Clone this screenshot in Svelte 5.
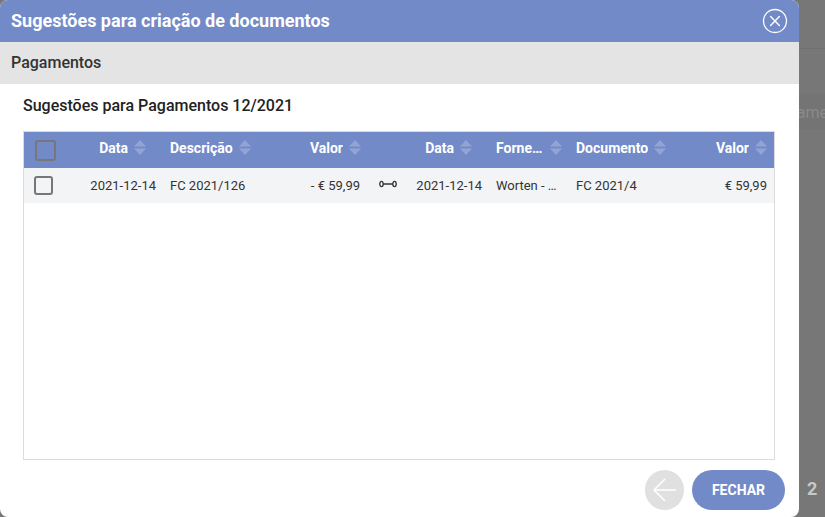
<script>
  const rows = [
    { data1: '2021-12-14', desc: 'FC 2021/126', valor1: '- € 59,99', data2: '2021-12-14', forn: 'Worten - Equipamentos', doc: 'FC 2021/4', valor2: '€ 59,99' }
  ];

  const cols = [
    { label: 'Data', cls: 'right date' },
    { label: 'Descrição', cls: '' },
    { label: 'Valor', cls: 'right' },
    { label: '', cls: 'link' },
    { label: 'Data', cls: 'right date' },
    { label: 'Fornecedor', cls: 'trunc' },
    { label: 'Documento', cls: '' },
    { label: 'Valor', cls: 'right' }
  ];
</script>

<div class="page">
  <div class="behind">
    <div class="behind-top"></div>
    <div class="behind-row"><span>Pagamentos</span></div>
  </div>

  <div class="modal">
    <header class="title">
      <h1>Sugestões para criação de documentos</h1>
      <button class="close" aria-label="Fechar">
        <svg width="26" height="26" viewBox="0 0 26 26" fill="none" stroke="#fff">
          <circle cx="13" cy="13" r="11.5" stroke-width="1.3" />
          <path d="M8.600 8.600l8.800 8.800M17.400 8.600l-8.800 8.800" stroke-width="1.400" stroke-linecap="round" />
        </svg>
      </button>
    </header>
    <div class="sub">Pagamentos</div>

    <div class="body">
      <h2>Sugestões para Pagamentos 12/2021</h2>

      <div class="table-box">
        <table>
          <colgroup>
            <col style="width:51px" />
            <col style="width:88px" />
            <col style="width:137px" />
            <col style="width:67px" />
            <col style="width:42px" />
            <col style="width:80px" />
            <col style="width:80px" />
            <col style="width:106px" />
            <col />
          </colgroup>
          <thead>
            <tr>
              <th class="check"><span class="box head-box"></span></th>
              {#each cols as c}
                <th class={c.cls}>
                  {#if c.label}
                    <span class="th-in">
                      <span class="lbl">{c.label}</span>
                      <svg class="sort" width="12" height="15" viewBox="0 0 12 15">
                        <path d="M6 0L12 6.500H0z" />
                        <path d="M0 8.500H12L6 15z" />
                      </svg>
                    </span>
                  {/if}
                </th>
              {/each}
            </tr>
          </thead>
          <tbody>
            {#each rows as r}
              <tr>
                <td class="check"><span class="box"></span></td>
                <td class="right">{r.data1}</td>
                <td>{r.desc}</td>
                <td class="right">{r.valor1}</td>
                <td class="link">
                  <svg width="18" height="8" viewBox="0 0 18 8" fill="none" stroke="#333">
                    <path d="M4 4h10" stroke-width="1.500" />
                    <ellipse cx="2.500" cy="4" rx="1.700" ry="2.600" stroke-width="1.300" />
                    <ellipse cx="15.500" cy="4" rx="1.700" ry="2.600" stroke-width="1.300" />
                  </svg>
                </td>
                <td class="right">{r.data2}</td>
                <td class="trunc">{r.forn}</td>
                <td>{r.doc}</td>
                <td class="right">{r.valor2}</td>
              </tr>
            {/each}
          </tbody>
        </table>
      </div>

      <div class="actions">
        <button class="back" aria-label="Voltar">
          <svg width="39" height="40" viewBox="0 0 39 40" fill="none" stroke="#fff" stroke-width="1.500">
            <path d="M31 20H9M20 9L9 20L20 31" />
          </svg>
        </button>
        <button class="fechar">FECHAR</button>
      </div>
    </div>
  </div>

  <div class="count">2</div>
</div>

<style>
  :global(body) {
    margin: 0;
    overflow: hidden;
    background: #777;
  }

  .page {
    position: relative;
    width: 825px;
    height: 517px;
    background: #777;
    font-family: Roboto, "Liberation Sans", sans-serif;
    overflow: hidden;
  }

  .behind {
    position: absolute;
    top: 0;
    left: 799px;
    width: 26px;
  }

  .behind-top {
    height: 48px;
    border-bottom: 1px solid #707070;
  }

  .behind-row {
    margin-top: 45px;
    height: 35px;
    background: #747474;
    font-size: 16px;
    line-height: 37px;
    color: #8a8a8a;
    white-space: nowrap;
    overflow: hidden;
  }

  .behind-row span {
    margin-left: -30px;
  }

  .modal {
    position: absolute;
    top: 0;
    left: 0;
    width: 799px;
    height: 517px;
    background: #fff;
    border-radius: 8px;
    overflow: hidden;
    display: flex;
    flex-direction: column;
  }

  .title {
    height: 42px;
    box-sizing: border-box;
    flex: none;
    background: #728ac8;
    display: flex;
    align-items: center;
    justify-content: space-between;
    padding: 0 11px 1px 11px;
  }

  h1 {
    margin: 0;
    font-size: 18px;
    font-weight: 700;
    color: #fff;
  }

  .close {
    all: unset;
    display: flex;
    width: 26px;
    height: 26px;
    margin-top: 1px;
  }

  .sub {
    height: 42px;
    flex: none;
    background: #e4e4e4;
    padding-left: 11px;
    line-height: 41px;
    font-size: 16px;
    font-weight: 500;
    color: #333;
  }

  .body {
    flex: 1;
    display: flex;
    flex-direction: column;
    padding: 0 24px 0 23px;
    min-height: 0;
  }

  h2 {
    margin: 0;
    height: 47px;
    flex: none;
    line-height: 43px;
    font-size: 16px;
    font-weight: 500;
    color: #222;
  }

  .table-box {
    height: 329px;
    flex: none;
    box-sizing: border-box;
    border: 1px solid #dcdcdc;
  }

  table {
    width: 100%;
    table-layout: fixed;
    border-collapse: collapse;
  }

  th {
    height: 36px;
    box-sizing: border-box;
    padding: 0 7px 6px;
    background: #728ac8;
    color: #fff;
    font-size: 14px;
    font-weight: 700;
    text-align: left;
  }

  th.check {
    padding: 0 7px;
  }

  td {
    height: 35px;
    box-sizing: border-box;
    padding: 0 7px 1px;
    background: #f3f4f6;
    color: #333;
    font-size: 13px;
  }

  td.check,
  td.link {
    padding: 0 7px;
  }

  .right {
    text-align: right;
  }

  th.date {
    padding-right: 17px;
  }

  th.right:not(.date) .th-in {
    margin-right: -1px;
  }

  th.right:last-child .th-in {
    margin-right: 0;
  }

  .trunc {
    white-space: nowrap;
    overflow: hidden;
    text-overflow: ellipsis;
  }

  .link svg {
    display: block;
    margin: -4px auto 0;
  }

  .th-in {
    display: inline-flex;
    align-items: center;
    gap: 6px;
    max-width: 100%;
    vertical-align: middle;
  }

  .lbl {
    overflow: hidden;
    text-overflow: ellipsis;
    white-space: nowrap;
    min-width: 0;
  }

  .sort {
    flex: none;
    fill: #fff;
    opacity: 0.22;
  }

  .box {
    display: block;
    box-sizing: border-box;
    width: 19px;
    height: 19px;
    border: 2px solid #777;
    border-radius: 3px;
    margin-left: 3px;
  }

  .head-box {
    width: 21px;
    height: 21px;
    margin-left: 4px;
  }

  .actions {
    margin-top: 10px;
    margin-right: -10px;
    display: flex;
    justify-content: flex-end;
    gap: 8px;
  }

  .back {
    all: unset;
    width: 39px;
    height: 40px;
    border-radius: 50%;
    background: #e0e0e0;
    display: flex;
  }

  .fechar {
    all: unset;
    box-sizing: border-box;
    width: 93px;
    height: 40px;
    border-radius: 20px;
    background: #728ac8;
    color: #fff;
    text-align: center;
    font-size: 14px;
    font-weight: 700;
    line-height: 39px;
  }

  .count {
    position: absolute;
    left: 807px;
    top: 478px;
    color: #c8c8c8;
    font-size: 18px;
    font-weight: 700;
  }
</style>
